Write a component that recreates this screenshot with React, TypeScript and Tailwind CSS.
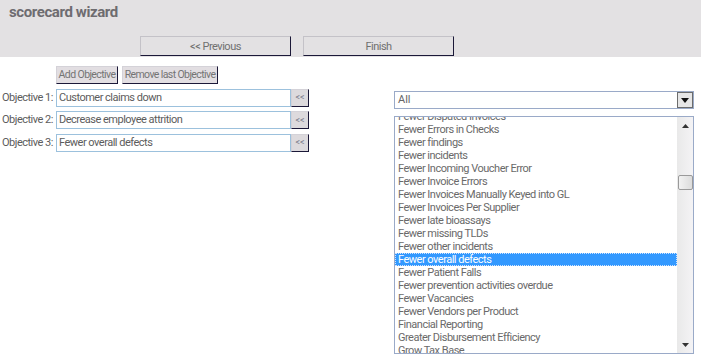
import React from "react";

const ITEMS = [
  "Fewer Disputed Invoices",
  "Fewer Errors in Checks",
  "Fewer findings",
  "Fewer incidents",
  "Fewer Incoming Voucher Error",
  "Fewer Invoice Errors",
  "Fewer Invoices Manually Keyed into GL",
  "Fewer Invoices Per Supplier",
  "Fewer late bioassays",
  "Fewer missing TLDs",
  "Fewer other incidents",
  "Fewer overall defects",
  "Fewer Patient Falls",
  "Fewer prevention activities overdue",
  "Fewer Vacancies",
  "Fewer Vendors per Product",
  "Financial Reporting",
  "Greater Disbursement Efficiency",
  "Grow Tax Base",
];

const OBJECTIVES = [
  "Customer claims down",
  "Decrease employee attrition",
  "Fewer overall defects",
];

const NavButton: React.FC<{ children: React.ReactNode }> = ({ children }) => (
  <button className="w-[151px] h-[20px] bg-[#e3e1e3] border border-t-[#c4c2c8] border-l-[#c4c2c8] border-r-[#1b1838] border-b-[#1b1838] text-[11px] tracking-[-0.5px] leading-none text-[#707070]">
    {children}
  </button>
);

const SmallButton: React.FC<{ children: React.ReactNode; className?: string }> = ({
  children,
  className,
}) => (
  <button
    className={
      "h-[18px] px-0 whitespace-nowrap bg-[#e2dee2] border border-t-[#d4d2d8] border-l-[#d4d2d8] border-r-[#1b1838] border-b-[#1b1838] text-[10.5px] tracking-[-0.6px] leading-none text-[#747474] " +
      (className || "")
    }
  >
    {children}
  </button>
);

export default function App() {
  return (
    <div
      className="w-[701px] h-[359px] bg-white overflow-hidden"
      style={{ fontFamily: "Roboto, 'Liberation Sans', sans-serif" }}
    >
      <div className="h-[57px] bg-[#e3e1e3]">
        <div className="pl-[9px] pt-[3px] text-[15px] font-bold tracking-[-0.4px] text-[#6e6c70] leading-[18px]">
          scorecard wizard
        </div>
        <div className="flex gap-[12px] pl-[140px] pt-[15px]">
          <NavButton>&lt;&lt; Previous</NavButton>
          <NavButton>Finish</NavButton>
        </div>
      </div>

      <div className="flex">
        <div className="w-[394px]">
          <div className="flex gap-[4px] pl-[56px] pt-[9px]">
            <SmallButton className="w-[62px]">Add Objective</SmallButton>
            <SmallButton className="w-[96px]">Remove last Objective</SmallButton>
          </div>
          <div className="flex flex-col gap-[5px] pt-[5px]">
            {OBJECTIVES.map((obj, i) => (
              <div key={i} className="flex items-center h-[17.5px]">
                <div className="w-[56px] pl-[2px] text-[11px] tracking-[-0.5px] text-[#5c5c5c] whitespace-nowrap">
                  Objective {i + 1}:
                </div>
                <div className="w-[235px] h-[18px] border border-[#9cc1dd] flex items-center pl-[2px] text-[11px] tracking-[-0.5px] text-[#5c5c5c]">
                  {obj}
                </div>
                <button className="w-[18px] h-[18px] bg-[#dddadd] border border-t-[#d4d2d8] border-l-[#d4d2d8] border-r-[#1b1838] border-b-[#1b1838] text-[9px] leading-none text-[#7a7a8a]">
                  &lt;&lt;
                </button>
              </div>
            ))}
          </div>
        </div>

        <div className="w-[300px] pt-[34px]">
          <div className="h-[18px] border border-[#9aaac8] flex items-center justify-between">
            <span className="pl-[3px] text-[11px] text-[#666]">All</span>
            <span className="w-[16px] h-[16px] bg-[#e6e6e6] border border-[#6c6c6c] flex items-center justify-center">
              <svg width="8" height="5" viewBox="0 0 8 5">
                <path d="M0 0 H8 L4 5 Z" fill="#111" />
              </svg>
            </span>
          </div>

          <div className="mt-[7px] h-[238px] border border-[#9aaac8] flex overflow-hidden">
            <div className="flex-1 overflow-hidden">
              <div className="mt-[-7px] flex flex-col">
                {ITEMS.map((item) =>
                  item === "Fewer overall defects" ? (
                    <div
                      key={item}
                      className="h-[13px] leading-[13px] pl-[3px] text-[11px] tracking-[-0.5px] text-white bg-[#3399ff] outline outline-1 outline-dotted outline-[#cfe3ff] -outline-offset-1 whitespace-nowrap"
                    >
                      {item}
                    </div>
                  ) : (
                    <div
                      key={item}
                      className="h-[13px] leading-[13px] pl-[3px] text-[11px] tracking-[-0.5px] text-[#6a6a6a] whitespace-nowrap"
                    >
                      {item}
                    </div>
                  )
                )}
              </div>
            </div>
            <div className="w-[16px] bg-gradient-to-r from-[#e9e9e9] to-[#f4f3f5] flex flex-col items-center">
              <svg width="7" height="4" viewBox="0 0 7 4" className="mt-[7px]">
                <path d="M3.5 0 L7 4 H0 Z" fill="#333" />
              </svg>
              <div className="mt-[47px] w-[15px] h-[15px] rounded-[2px] border border-[#9a9a9a] bg-gradient-to-r from-[#f2f2f2] to-[#dcdcdc]" />
              <div className="flex-1" />
              <svg width="7" height="4" viewBox="0 0 7 4" className="mb-[6px]">
                <path d="M0 0 H7 L3.5 4 Z" fill="#333" />
              </svg>
            </div>
          </div>
        </div>
      </div>
    </div>
  );
}
